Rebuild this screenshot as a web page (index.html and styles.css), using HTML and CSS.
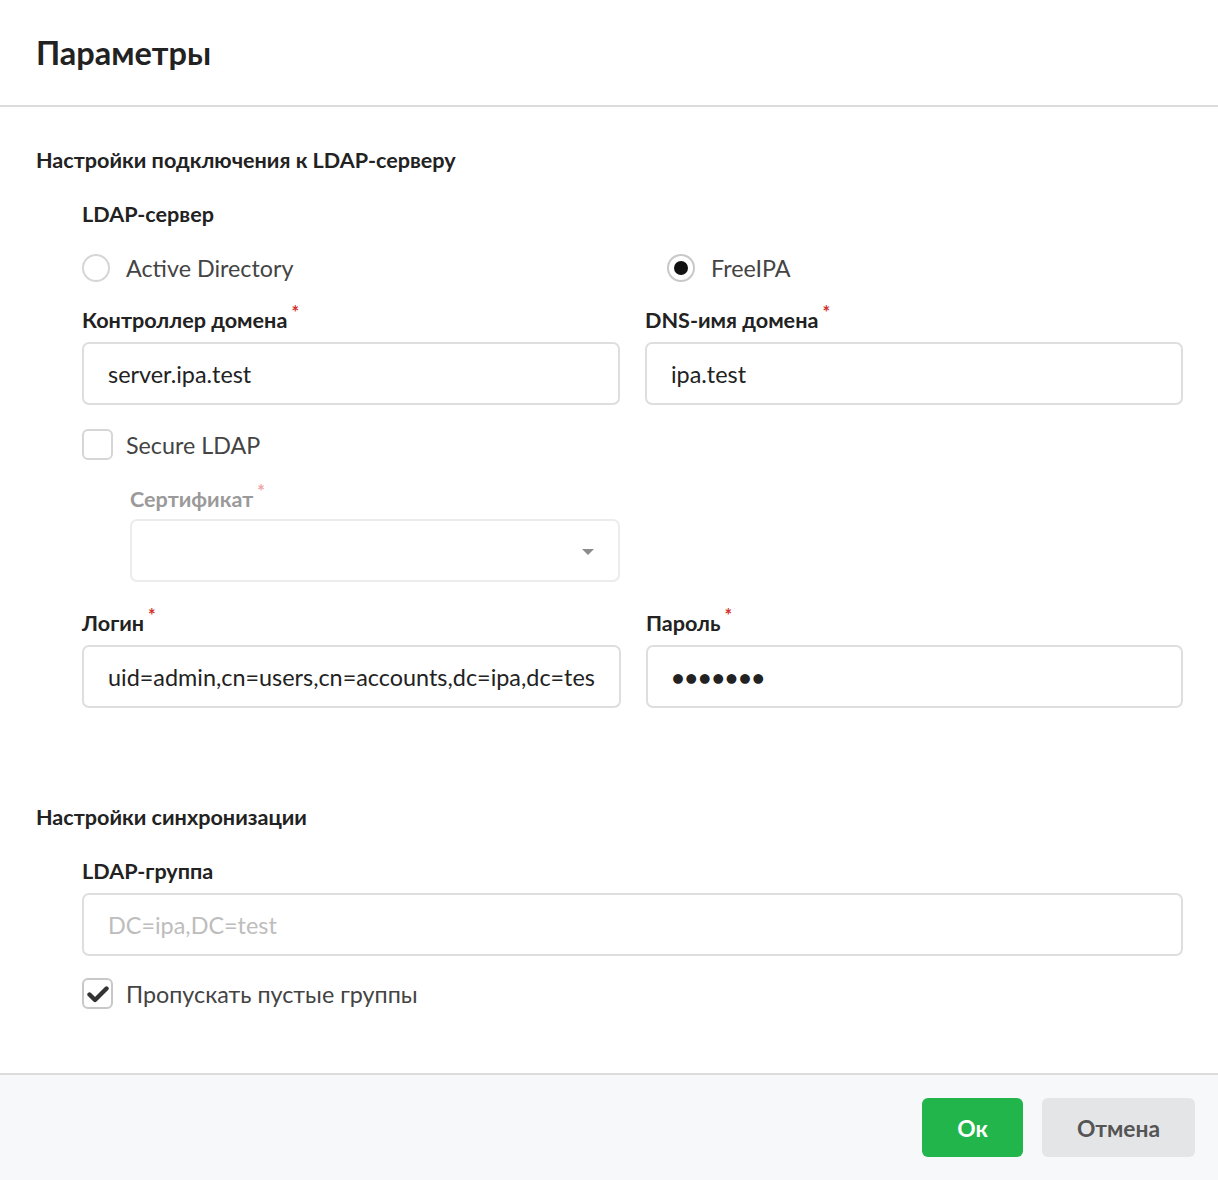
FILE: index.html
```html
<!DOCTYPE html>
<html lang="ru">
<head>
<meta charset="utf-8">
<title>Параметры</title>
<link rel="stylesheet" href="styles.css">
</head>
<body>
<div class="dialog">
  <header class="dlg-header">
    <h1 class="dlg-title">Параметры</h1>
  </header>
  <main class="dlg-body">
    <h2 class="section-title">Настройки подключения к LDAP-серверу</h2>
    <div class="fields">
      <div class="label label-first">LDAP-сервер</div>
      <div class="grid radios">
        <label class="choice">
          <span class="radio"></span>
          <span class="choice-text">Active Directory</span>
        </label>
        <label class="choice choice-right">
          <span class="radio radio-on"><span class="radio-dot"></span></span>
          <span class="choice-text">FreeIPA</span>
        </label>
      </div>

      <div class="grid row-gap">
        <div class="field">
          <div class="label">Контроллер домена<span class="req">*</span></div>
          <div class="input">server.ipa.test</div>
        </div>
        <div class="field">
          <div class="label">DNS-имя домена<span class="req">*</span></div>
          <div class="input">ipa.test</div>
        </div>
      </div>

      <label class="choice check-row">
        <span class="checkbox"></span>
        <span class="choice-text">Secure LDAP</span>
      </label>

      <div class="grid cert-row">
        <div class="field cert">
          <div class="label label-disabled">Сертификат<span class="req req-disabled">*</span></div>
          <div class="input input-disabled select">
            <span class="caret"></span>
          </div>
        </div>
      </div>

      <div class="grid login-row">
        <div class="field">
          <div class="label">Логин<span class="req">*</span></div>
          <div class="input">uid=admin,cn=users,cn=accounts,dc=ipa,dc=tes</div>
        </div>
        <div class="field">
          <div class="label">Пароль<span class="req">*</span></div>
          <div class="input password">●●●●●●●</div>
        </div>
      </div>
    </div>

    <h2 class="section-title section-second">Настройки синхронизации</h2>
    <div class="fields">
      <div class="field">
        <div class="label label-first">LDAP-группа</div>
        <div class="input placeholder">DC=ipa,DC=test</div>
      </div>
      <label class="choice check-row check-row-2">
        <span class="checkbox checkbox-on">
          <svg width="22" height="18" viewBox="0 0 22 18" aria-hidden="true"><path d="M2.5 9.5 L8 15 L19.5 3.5" fill="none" stroke="#333" stroke-width="4.4" stroke-linecap="round" stroke-linejoin="round"/></svg>
        </span>
        <span class="choice-text">Пропускать пустые группы</span>
      </label>
    </div>
  </main>
  <footer class="dlg-footer">
    <button class="btn btn-ok" type="button">Ок</button>
    <button class="btn btn-cancel" type="button">Отмена</button>
  </footer>
</div>
</body>
</html>
```

FILE: styles.css
```css
* { box-sizing: border-box; }
html, body { margin: 0; padding: 0; background: #fff; }
body {
  font-family: Lato, "Noto Sans", "Liberation Sans", sans-serif;
  color: #222;
}
.dialog { width: 1218px; min-height: 1180px; display: flex; flex-direction: column; }

.dlg-header {
  height: 107px;
  padding: 0 36px;
  display: flex;
  align-items: center;
  border-bottom: 2px solid #dcdcdc;
}
.dlg-title {
  margin: 0;
  font-size: 32.5px;
  font-weight: 700;
  color: #222;
  line-height: 40px;
  padding-top: 1px;
}

.dlg-body {
  padding: 41px 35px 60px 36px;
  flex: 1;
}
.section-title {
  margin: 0;
  font-size: 21.6px;
  font-weight: 700;
  line-height: 24px;
  color: #222;
}
.section-second { margin-top: 97px; }

.fields { padding-left: 46px; display: flex; flex-direction: column; }

.label {
  font-size: 21.6px;
  font-weight: 700;
  line-height: 24px;
  height: 24px;
  color: #222;
  margin-bottom: 10px;
  white-space: nowrap;
}
.label-first { margin-top: 30px; }
.label-disabled { color: #9a9a9a; }
.req {
  color: #d0312d;
  font-size: 18px;
  position: relative;
  top: -9px;
  margin-left: 4px;
}
.req-disabled { color: #f1a3a3; }

.grid {
  display: grid;
  grid-template-columns: 1fr 1fr;
  column-gap: 25px;
}

.radios { margin-top: 16px; height: 30px; }
.choice {
  display: flex;
  align-items: center;
  gap: 16px;
  height: 31px;
}
.choice-right { padding-left: 22px; }
.choice-text {
  font-size: 23.3px;
  color: #444;
  line-height: 28px;
}
.radio {
  width: 28px; height: 28px;
  border: 2px solid #d6d6d6;
  border-radius: 50%;
  display: flex;
  align-items: center;
  justify-content: center;
  flex: none;
}
.radio-on { border-color: #c8c8c8; }
.radio-dot { width: 14px; height: 14px; border-radius: 50%; background: #111; }

.row-gap { margin-top: 26px; }

.input {
  height: 63px;
  border: 2px solid #dedede;
  border-radius: 7px;
  padding: 0 24px;
  display: flex;
  align-items: center;
  font-size: 23.4px;
  color: #222;
  white-space: nowrap;
  overflow: hidden;
  background: #fff;
}
.input-disabled { border-color: #ececec; }
.placeholder { color: #bdbdbd; }
.password { font-size: 20px; letter-spacing: 1.4px; color: #222; }

.check-row { margin-top: 24px; }
.check-row-2 { margin-top: 22px; }
.checkbox {
  width: 31px; height: 31px;
  border: 2px solid #d6d6d6;
  border-radius: 6px;
  display: flex;
  align-items: center;
  justify-content: center;
  flex: none;
  margin-right: -3px;
}
.checkbox-on { border-color: #c8c8c8; }

.cert-row { margin-top: 27px; }
.cert { padding-left: 48px; }
.cert .label { margin-bottom: 8px; }
.select { position: relative; }
.caret {
  position: absolute;
  right: 24px;
  top: 28px;
  width: 0; height: 0;
  border-left: 6px solid transparent;
  border-right: 6px solid transparent;
  border-top: 6px solid #8c8c8c;
}

.login-row { margin-top: 29px; }

.dlg-footer {
  height: 107px;
  border-top: 2px solid #dcdcdc;
  background: #f7f8fa;
  display: flex;
  align-items: center;
  justify-content: flex-end;
  gap: 19px;
  padding-right: 23px;
}
.btn {
  font-family: Lato, "Noto Sans", "Liberation Sans", sans-serif;
  font-size: 22.8px;
  font-weight: 700;
  height: 59px;
  border: none;
  border-radius: 6px;
  padding: 0;
}
.btn-ok { width: 101px; background: #21b54b; color: #fff; }
.btn-cancel { width: 153px; background: #e4e5e7; color: #555; }
```
